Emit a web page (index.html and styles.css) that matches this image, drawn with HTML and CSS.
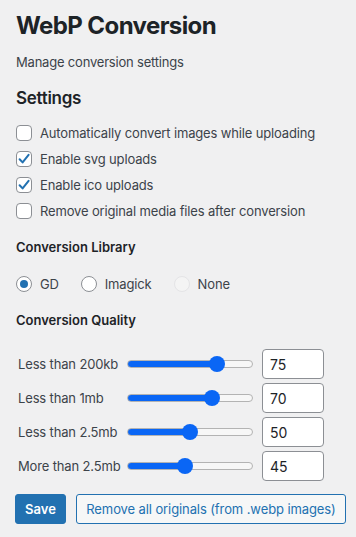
FILE: index.html
```html
<!DOCTYPE html>
<html lang="en">
<head>
<meta charset="utf-8">
<title>WebP Conversion</title>
<link rel="stylesheet" href="styles.css">
</head>
<body>
<div class="wrap">
  <h1 class="title">WebP Conversion</h1>
  <p class="subtitle">Manage conversion settings</p>
  <h2 class="section">Settings</h2>
  <div class="checks">
    <label class="check"><span class="box"></span><span>Automatically convert images while uploading</span></label>
    <label class="check"><span class="box on"><svg viewBox="0 0 16 16" width="16" height="16"><path d="M3.6 8.2 L6.6 11.4 L12.6 3.8" fill="none" stroke="#2271b1" stroke-width="2" stroke-linecap="round" stroke-linejoin="round"/></svg></span><span>Enable svg uploads</span></label>
    <label class="check"><span class="box on"><svg viewBox="0 0 16 16" width="16" height="16"><path d="M3.6 8.2 L6.6 11.4 L12.6 3.8" fill="none" stroke="#2271b1" stroke-width="2" stroke-linecap="round" stroke-linejoin="round"/></svg></span><span>Enable ico uploads</span></label>
    <label class="check"><span class="box"></span><span>Remove original media files after conversion</span></label>
  </div>
  <h3 class="label-head">Conversion Library</h3>
  <div class="radios">
    <label class="radio"><span class="dot on"></span><span>GD</span></label>
    <label class="radio"><span class="dot"></span><span>Imagick</span></label>
    <label class="radio"><span class="dot disabled"></span><span>None</span></label>
  </div>
  <h3 class="label-head">Conversion Quality</h3>
  <div class="quality">
    <div class="qrow"><span class="qlabel">Less than 200kb</span><input class="range" type="range" min="0" max="100" value="75" style="--v:75"><input class="num" type="text" value="75"></div>
    <div class="qrow"><span class="qlabel">Less than 1mb</span><input class="range" type="range" min="0" max="100" value="70" style="--v:70"><input class="num" type="text" value="70"></div>
    <div class="qrow"><span class="qlabel">Less than 2.5mb</span><input class="range" type="range" min="0" max="100" value="50" style="--v:50"><input class="num" type="text" value="50"></div>
    <div class="qrow"><span class="qlabel">More than 2.5mb</span><input class="range" type="range" min="0" max="100" value="45" style="--v:45"><input class="num" type="text" value="45"></div>
  </div>
  <div class="actions">
    <button class="btn primary">Save</button>
    <button class="btn secondary">Remove all originals (from .webp images)</button>
  </div>
</div>
</body>
</html>
```
FILE: styles.css
```css
html, body {
  margin: 0;
  padding: 0;
  background: #f0f0f1;
}
body {
  font-family: Inter, "Noto Sans", sans-serif;
  color: #1d2327;
  font-size: 13px;
}
.wrap {
  padding: 9px 16px 0;
}
.title {
  margin: 0;
  font-size: 24px;
  line-height: 34px;
  font-weight: 700;
  color: #1d2327;
  letter-spacing: -0.6px;
}
.subtitle {
  margin: 9px 0 0;
  line-height: 20px;
  font-size: 13px;
  letter-spacing: -0.2px;
  color: #3c434a;
}
.section {
  margin: 14px 0 0;
  font-size: 17px;
  line-height: 24px;
  font-weight: 600;
  letter-spacing: -0.3px;
  color: #1d2327;
}
.checks {
  margin-top: 10px;
  display: flex;
  flex-direction: column;
}
.check {
  display: flex;
  align-items: center;
  height: 26px;
  gap: 8px;
  font-size: 13px;
  letter-spacing: -0.15px;
  color: #3c434a;
}
.box {
  width: 14px;
  height: 14px;
  border: 1px solid #8c8f94;
  border-radius: 4px;
  background: #fff;
  display: flex;
  align-items: center;
  justify-content: center;
  flex: none;
}
.box svg {
  flex: none;
}
.label-head {
  margin: 13px 0 0;
  font-size: 13px;
  line-height: 20px;
  font-weight: 600;
  color: #1d2327;
}
.radios {
  margin-top: 14px;
  display: flex;
  align-items: center;
  height: 26px;
}
.radio {
  display: flex;
  align-items: center;
  gap: 8px;
  margin-right: 22px;
  font-size: 13px;
  letter-spacing: -0.15px;
  color: #3c434a;
}
.dot {
  width: 14px;
  height: 14px;
  border: 1px solid #8c8f94;
  border-radius: 50%;
  background: #fff;
  display: flex;
  align-items: center;
  justify-content: center;
  flex: none;
}
.dot.on::after {
  content: "";
  width: 8px;
  height: 8px;
  border-radius: 50%;
  background: #2271b1;
}
.dot.disabled {
  background: #f4f4f4;
  border-color: #e4e4e6;
}
.quality {
  margin-top: 19px;
  display: flex;
  flex-direction: column;
  gap: 4px;
}
.qrow {
  display: grid;
  grid-template-columns: 101px 126px 62px;
  column-gap: 8px;
  align-items: center;
  height: 30px;
  margin-left: 2px;
}
.qlabel {
  font-size: 13px;
  letter-spacing: -0.15px;
  color: #3c434a;
  white-space: nowrap;
}
.range {
  -webkit-appearance: none;
  appearance: none;
  width: 126px;
  height: 16px;
  margin: 0;
  background: transparent;
}
.range::-webkit-slider-runnable-track {
  height: 8px;
  border-radius: 4px;
  box-sizing: border-box;
  border: 1px solid #b3b3b3;
  background: linear-gradient(to right, #0a66f5 calc(8px + var(--v) * 1.1px), #f7f7f7 0);
}
.range::-webkit-slider-thumb {
  -webkit-appearance: none;
  width: 16px;
  height: 16px;
  border-radius: 50%;
  background: #0a66f5;
  border: none;
  margin-top: -5px;
}
.num {
  box-sizing: border-box;
  width: 62px;
  height: 30px;
  margin: 0 0 0 1px;
  border: 1px solid #8c8f94;
  border-radius: 4px;
  background: #fff;
  padding: 0 7px;
  font-family: Inter, "Noto Sans", sans-serif;
  font-size: 14px;
  color: #1d2327;
}
.actions {
  margin-top: 13px;
  display: flex;
  gap: 10px;
}
.btn {
  box-sizing: border-box;
  flex: none;
  height: 30px;
  border-radius: 3px;
  font-family: Inter, "Noto Sans", sans-serif;
  font-size: 13px;
  padding: 0 12px;
  cursor: pointer;
}
.btn.primary {
  background: #2271b1;
  border: 1px solid #2271b1;
  color: #fff;
  font-weight: 600;
  width: 51px;
  padding: 0;
  margin-left: -1px;
}
.btn.secondary {
  background: #f6f7f7;
  border: 1px solid #2271b1;
  color: #2271b1;
  letter-spacing: -0.1px;
  width: 270px;
  padding: 0;
}
```
